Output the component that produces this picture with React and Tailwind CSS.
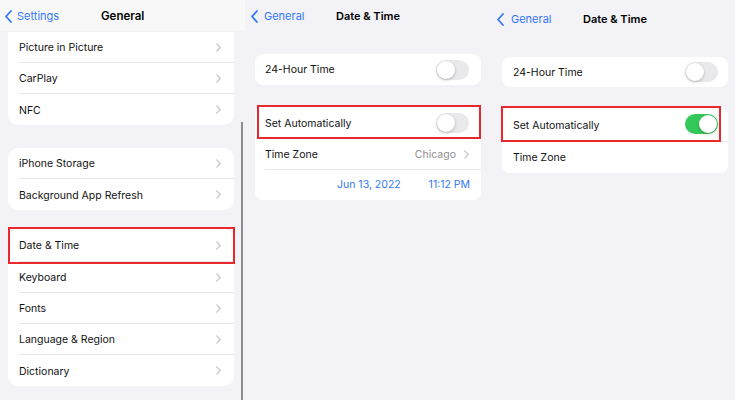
import React from "react";

const font = { fontFamily: '"Inter", "Noto Sans", sans-serif' };

function Chevron() {
  return (
    <svg width="5" height="9" viewBox="0 0 5 9" className="shrink-0">
      <path d="M0.8 0.8 L4.2 4.5 L0.8 8.2" fill="none" stroke="#c4c4c7" strokeWidth="1.2" strokeLinecap="round" strokeLinejoin="round" />
    </svg>
  );
}

function BackChevron() {
  return (
    <svg width="7" height="13" viewBox="0 0 7 13" className="shrink-0">
      <path d="M6 1 L1 6.5 L6 12" fill="none" stroke="#3478f6" strokeWidth="1.8" strokeLinecap="round" strokeLinejoin="round" />
    </svg>
  );
}

function Toggle({ on }) {
  return (
    <div className={`relative w-[33px] h-[20px] rounded-full ${on ? "bg-[#34c759]" : "bg-[#e9e9eb]"}`}>
      <div
        className={`absolute top-[1px] w-[18px] h-[18px] rounded-full bg-white shadow-[0_1px_3px_rgba(0,0,0,0.25)] ${on ? "right-[1px]" : "left-[1px]"}`}
      />
    </div>
  );
}

function Row({ label, last, h = "h-[31px]" }) {
  return (
    <div className="pl-[11px]">
      <div className={`flex items-center justify-between ${h} pr-[13px] ${last ? "" : "border-b border-[#e7e7ea]"}`}>
        <span className="text-[10.5px] text-[#111] pt-[2px]">{label}</span>
        <Chevron />
      </div>
    </div>
  );
}

function LeftPanel() {
  return (
    <div className="relative w-[245px] h-[400px] shrink-0 overflow-hidden">
      <div className="flex items-center h-[31px] pt-[2px] bg-[#f8f8f8]">
        <div className="flex items-center w-[101px] pl-[5px] gap-[5px]">
          <BackChevron />
          <span className="text-[11px] text-[#3478f6]">Settings</span>
        </div>
        <span className="text-[11.5px] font-semibold text-black">General</span>
      </div>
      <div className="pt-[1px] pl-[8px] w-[234px]">
        <div className="bg-white rounded-b-[10px]">
          <Row label="Picture in Picture" />
          <Row label="CarPlay" />
          <Row label="NFC" last />
        </div>
        <div className="bg-white rounded-[10px] mt-[23px]">
          <Row label="iPhone Storage" />
          <Row label="Background App Refresh" last />
        </div>
        <div className="bg-white rounded-[10px] mt-[19px]">
          <div className="relative">
            <Row label="Date & Time" h="h-[33px]" />
            <div className="absolute -top-[2px] -bottom-[2px] left-0 -right-[1px] border-2 border-[#e8282c]" />
          </div>
          <Row label="Keyboard" />
          <Row label="Fonts" />
          <Row label="Language & Region" />
          <Row label="Dictionary" last />
        </div>
      </div>
      <div className="absolute left-[241px] top-[122px] w-[2px] h-[278px] bg-[#8c8c8c]" />
    </div>
  );
}

function MiddlePanel() {
  return (
    <div className="w-[245px] h-[400px] shrink-0">
      <div className="flex items-center h-[31px] pt-[2px]">
        <div className="flex items-center w-[91px] pl-[6px] gap-[6px]">
          <BackChevron />
          <span className="text-[11px] text-[#3478f6]">General</span>
        </div>
        <span className="text-[11px] font-semibold text-black">Date &amp; Time</span>
      </div>
      <div className="pl-[10px] w-[236px]">
        <div className="bg-white rounded-[8px] mt-[23px] h-[31px] flex items-center justify-between pl-[10px] pr-[12px]">
          <span className="text-[10.5px] text-[#111] pt-[1px]">24-Hour Time</span>
          <Toggle />
        </div>
        <div className="bg-white rounded-[8px] mt-[21px]">
          <div className="relative pl-[10px]">
            <div className="flex items-center justify-between h-[33px] pr-[12px]">
              <span className="text-[10.5px] text-[#111] pt-[2px]">Set Automatically</span>
              <Toggle />
            </div>
            <div className="absolute -top-[1px] bottom-0 left-[2px] right-0 border-2 border-[#e8282c]" />
          </div>
          <div className="pl-[10px]">
            <div className="flex items-center justify-between h-[31px] pr-[12px] border-b border-[#e7e7ea]">
              <span className="text-[10.5px] text-[#111] pt-[2px]">Time Zone</span>
              <div className="flex items-center gap-[8px]">
                <span className="text-[10.5px] text-[#8e8e93] pt-[2px]">Chicago</span>
                <Chevron />
              </div>
            </div>
          </div>
          <div className="flex items-center h-[30px] pl-[82px] pr-[11px] justify-between">
            <span className="text-[10.5px] text-[#3478f6]">Jun 13, 2022</span>
            <span className="text-[10.5px] text-[#3478f6]">11:12 PM</span>
          </div>
        </div>
      </div>
    </div>
  );
}

function RightPanel() {
  return (
    <div className="w-[245px] h-[400px] shrink-0">
      <div className="flex items-center h-[38px]">
        <div className="flex items-center w-[93px] pl-[7px] gap-[7px]">
          <BackChevron />
          <span className="text-[11px] text-[#3478f6]">General</span>
        </div>
        <span className="text-[11px] font-semibold text-black">Date &amp; Time</span>
      </div>
      <div className="pl-[12px] w-[238px]">
        <div className="bg-white rounded-[8px] mt-[19px] h-[30px] flex items-center justify-between pl-[11px] pr-[10px]">
          <span className="text-[10.5px] text-[#111] pt-[1px]">24-Hour Time</span>
          <Toggle />
        </div>
        <div className="bg-white rounded-[8px] mt-[20px]">
          <div className="relative pl-[11px]">
            <div className="flex items-center justify-between h-[35px] pr-[10px] border-b border-[#e7e7ea]">
              <span className="text-[10.5px] text-[#111] pt-[3px]">Set Automatically</span>
              <Toggle on />
            </div>
            <div className="absolute -top-[1px] bottom-[0px] -left-[1px] right-[7px] border-2 border-[#e8282c]" />
          </div>
          <div className="pl-[11px]">
            <div className="flex items-center h-[31px]">
              <span className="text-[10.5px] text-[#111] pt-[1px]">Time Zone</span>
            </div>
          </div>
        </div>
      </div>
    </div>
  );
}

export default function App() {
  return (
    <div className="w-[735px] h-[400px] flex bg-[#f2f2f7] overflow-hidden" style={font}>
      <LeftPanel />
      <MiddlePanel />
      <RightPanel />
    </div>
  );
}
